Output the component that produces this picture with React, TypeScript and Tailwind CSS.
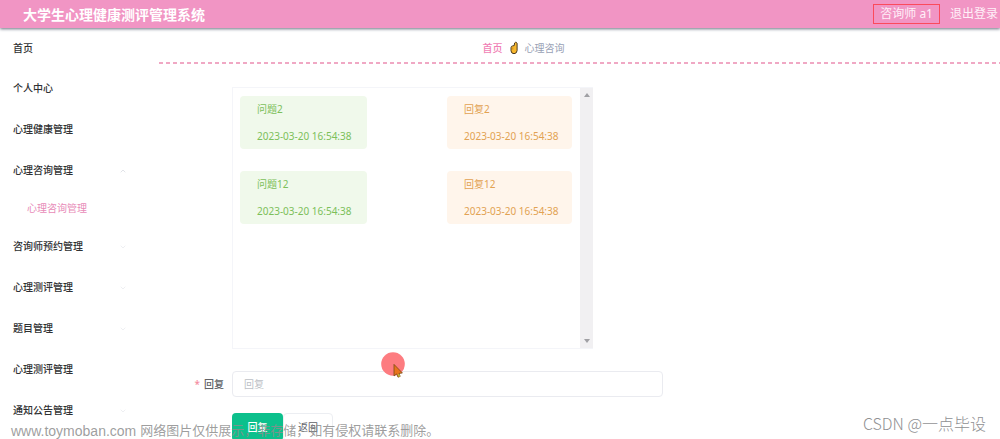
import { useState } from "react";
import { ChevronDown, ChevronUp } from "lucide-react";

type MenuItem = {
  name: string;
  arrow?: "up" | "down";
  children?: string[];
};

// Sidebar entries
const menu: MenuItem[] = [
  { name: "个人中心" },
  { name: "心理健康管理" },
  { name: "心理咨询管理", arrow: "up", children: ["心理咨询管理"] },
  { name: "咨询师预约管理", arrow: "down" },
  { name: "心理测评管理", arrow: "down" },
  { name: "题目管理", arrow: "down" },
  { name: "心理测评管理" },
  { name: "通知公告管理", arrow: "down" },
];

// Question / answer pairs
const messages = [
  { ask: "问题2", reply: "回复2", time: "2023-03-20 16:54:38" },
  { ask: "问题12", reply: "回复12", time: "2023-03-20 16:54:38" },
];

function Header() {
  return (
    <header className="relative z-10 flex h-7 items-center justify-between bg-[#f195c4] pl-[23px] pr-0.5 text-white shadow-[0_1px_3px_#6b7280]">
      <h1 className="text-[14px] font-bold">大学生心理健康测评管理系统</h1>
      <div className="flex items-center gap-2.5 text-[12px] text-[#fff0f8]">
        <span className="flex h-5 items-center border border-[#fb4a5c] px-1.5 text-[12px]">
          咨询师 a1
        </span>
        <a href="#">退出登录</a>
      </div>
    </header>
  );
}

function Sidebar() {
  return (
    <nav className="w-[159px] shrink-0 pl-[13px] pr-8 text-[10px] font-medium text-[#303133]">
      <a href="#" className="flex h-10 items-center">
        首页
      </a>
      <ul>
        {menu.map((item, index) => (
          <li key={index}>
            <a href="#" className="flex h-[41px] items-center justify-between">
              {item.name}
              {item.arrow === "up" && <ChevronUp className="size-2 text-gray-300" />}
              {item.arrow === "down" && <ChevronDown className="size-2 text-gray-200" />}
            </a>
            {item.children?.map((child) => (
              <a
                key={child}
                href="#"
                className="flex h-[35px] items-center pl-3.5 font-normal text-[#e88bb8]"
              >
                {child}
              </a>
            ))}
          </li>
        ))}
      </ul>
    </nav>
  );
}

// Small pointing hand between the breadcrumb items
function Hand() {
  return (
    <svg viewBox="0 0 10 14" className="h-3.5 w-2.5">
      <path
        d="M5.6 2Q6.2 1 7.4 1.4Q8.2 1.8 8.1 3V9.6Q7.8 12.6 5 12.7Q2.2 12.6 2 9.8V6.6Q2.2 5 3.6 4.9L5.2 4.6Z"
        fill="#f7b72c"
        stroke="#4b3a22"
        strokeWidth="1"
      />
      <path d="M3.8 6.4V8.6" stroke="#b87a18" strokeWidth=".7" />
    </svg>
  );
}

function Card({ text, time, tone }: { text: string; time: string; tone: string }) {
  return (
    <div className={`h-[53px] rounded-sm pl-[17px] leading-[27px] ${tone}`}>
      <p>{text}</p>
      <p>{time}</p>
    </div>
  );
}

function Messages() {
  return (
    <div className="flex h-[262px] max-w-[361px] border border-r-0 border-[#f4f5f9] text-[10px]">
      <div className="flex flex-1 flex-col gap-[22px] pl-[7px] pr-2 pt-2">
        {messages.map((m) => (
          <div key={m.ask} className="grid grid-cols-[127px_125px] justify-between">
            <Card text={m.ask} time={m.time} tone="bg-[#f0f9eb] text-[#7cc05a]" />
            <Card text={m.reply} time={m.time} tone="bg-[#fff5eb] text-[#e2a252]" />
          </div>
        ))}
      </div>
      {/* Scroll track */}
      <div className="flex w-[13px] flex-col items-center justify-between bg-[#f1f0f2] py-[5px]">
        <svg viewBox="0 0 6 4" className="h-1 w-1.5">
          <path d="M0 4L3 0L6 4Z" fill="#a0a0a4" />
        </svg>
        <svg viewBox="0 0 6 4" className="h-1 w-1.5">
          <path d="M0 0L3 4L6 0Z" fill="#a0a0a4" />
        </svg>
      </div>
    </div>
  );
}

function Pointer() {
  return (
    <svg viewBox="0 0 26 28" className="pointer-events-none absolute left-[381px] top-[351px] h-7 w-[26px]">
      <circle cx="12" cy="13" r="11.8" fill="#fd7c80" />
      <path
        d="M13 13.4V25L15.6 22.9L17 26.2L19.2 25.4L18 22.4L21.4 22Z"
        fill="#e8741c"
        stroke="#7a4a13"
        strokeWidth=".8"
      />
      <path d="M16.6 23.4L17.8 26L19.2 25.4L18 22.8Z" fill="#b9b93a" />
    </svg>
  );
}

function App() {
  const [reply, setReply] = useState("");

  return (
    <div className="relative h-screen overflow-hidden bg-white font-['Noto_Sans','Noto_Sans_CJK_SC',sans-serif]">
      <Header />
      <div className="flex">
        <Sidebar />
        <main className="min-w-0 flex-1">
          <div className="flex h-[34px] items-center justify-center gap-1.5 pr-28 pt-1.5 text-[10px]">
            <a href="#" className="font-medium text-[#f07fb5]">
              首页
            </a>
            <Hand />
            <span className="text-[#98a1b5]">心理咨询</span>
          </div>
          <div className="h-0.5 bg-[repeating-linear-gradient(90deg,#f0a8c4_0_4px,#ffffff_4px_7px)]" />

          <form
            className="grid grid-cols-[73px_minmax(0,431px)] pt-[23px] text-[10px]"
            onSubmit={(e) => e.preventDefault()}
          >
            <div className="col-start-2">
              <Messages />
            </div>
            <label
              htmlFor="reply"
              className="mt-[22px] flex h-[26px] items-center justify-end gap-1 pr-2 font-medium text-[#606266]"
            >
              <span className="text-[#f58ca0]">*</span>
              回复
            </label>
            <input
              id="reply"
              value={reply}
              onChange={(e) => setReply(e.target.value)}
              placeholder="回复"
              className="mt-[22px] h-[26px] rounded-sm border border-[#eaebf0] px-[11px] outline-none placeholder:text-[#bcbfc6]"
            />
            <div className="col-start-2 mt-4 flex">
              <button type="submit" className="h-7 w-[51px] rounded-sm bg-[#0cc08c] font-medium text-white">
                回复
              </button>
              <button type="button" className="h-7 w-[50px] rounded-sm border border-[#eceef2] text-[#606266]">
                返回
              </button>
            </div>
          </form>
        </main>
      </div>

      <Pointer />
      <p className="pointer-events-none absolute bottom-0 left-[11px] flex items-center gap-1 whitespace-nowrap font-['Liberation_Sans','Noto_Sans_CJK_SC',sans-serif] text-[13px] leading-4 text-[#8d8d8d]/85">
        <span className="text-[14px]">www.toymoban.com</span>
        <span>网络图片仅供展示，非存储，如有侵权请联系删除。</span>
      </p>
      <p className="pointer-events-none absolute bottom-1 right-3.5 font-['Noto_Sans_CJK_SC',sans-serif] text-[16px] font-light leading-6 text-[#8f9092]">
        CSDN @一点毕设
      </p>
    </div>
  );
}

export default App;
